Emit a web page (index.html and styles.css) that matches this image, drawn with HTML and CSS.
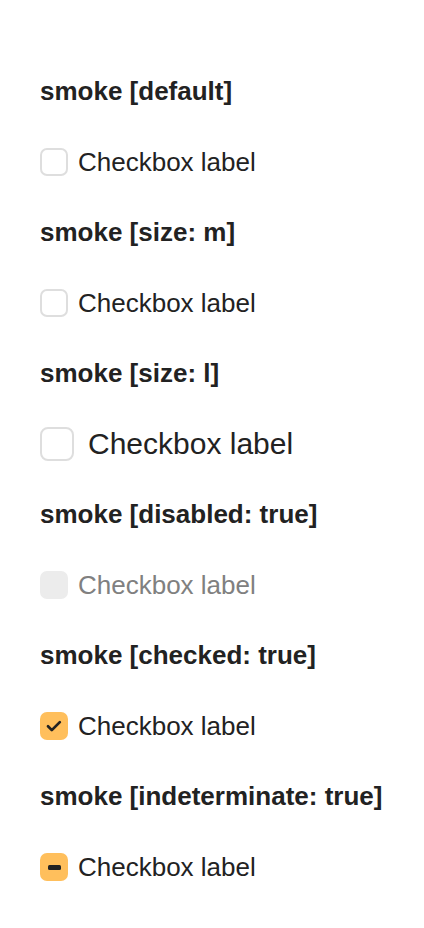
FILE: index.html
```html
<!DOCTYPE html>
<html lang="en">
<head>
<meta charset="utf-8">
<title>Checkbox smoke</title>
<link rel="stylesheet" href="styles.css">
</head>
<body>
<main class="page">
  <section class="case">
    <h2 class="case-title">smoke [default]</h2>
    <label class="cb">
      <span class="cb-box"></span>
      <span class="cb-label">Checkbox label</span>
    </label>
  </section>
  <section class="case">
    <h2 class="case-title">smoke [size: m]</h2>
    <label class="cb">
      <span class="cb-box"></span>
      <span class="cb-label">Checkbox label</span>
    </label>
  </section>
  <section class="case">
    <h2 class="case-title">smoke [size: l]</h2>
    <label class="cb cb-l">
      <span class="cb-box"></span>
      <span class="cb-label">Checkbox label</span>
    </label>
  </section>
  <section class="case">
    <h2 class="case-title">smoke [disabled: true]</h2>
    <label class="cb cb-disabled">
      <span class="cb-box"></span>
      <span class="cb-label">Checkbox label</span>
    </label>
  </section>
  <section class="case">
    <h2 class="case-title">smoke [checked: true]</h2>
    <label class="cb cb-checked">
      <span class="cb-box">
        <svg class="cb-icon" viewBox="0 0 28 28" width="28" height="28"><polyline points="8,14.3 11.8,18.1 19.8,10.1" fill="none" stroke="#222" stroke-width="2.7" stroke-linecap="round" stroke-linejoin="round"/></svg>
      </span>
      <span class="cb-label">Checkbox label</span>
    </label>
  </section>
  <section class="case">
    <h2 class="case-title">smoke [indeterminate: true]</h2>
    <label class="cb cb-checked">
      <span class="cb-box"><span class="cb-dash"></span></span>
      <span class="cb-label">Checkbox label</span>
    </label>
  </section>
</main>
</body>
</html>
```

FILE: styles.css
```css
html, body {
  margin: 0;
  padding: 0;
  background: #fff;
}

body {
  font-family: "Liberation Sans", Arial, sans-serif;
  color: #222;
}

.page {
  padding: 73px 0 0 40px;
  display: flex;
  flex-direction: column;
}

.case {
  display: flex;
  flex-direction: column;
  margin-bottom: 38px;
}

.case-title {
  margin: 0 0 39px 0;
  font-size: 26px;
  line-height: 36px;
  font-weight: 700;
  color: #222;
}

.cb {
  display: flex;
  align-items: center;
  gap: 10px;
  height: 28px;
}

.cb-box {
  box-sizing: border-box;
  width: 28px;
  height: 28px;
  border: 2px solid #dedede;
  border-radius: 7px;
  background: #fff;
  flex: none;
  display: flex;
  align-items: center;
  justify-content: center;
  position: relative;
}

.cb-label {
  font-size: 26px;
  line-height: 28px;
  color: #222;
}

.cb-l {
  gap: 14px;
}

.cb-l .cb-box {
  width: 34px;
  height: 34px;
  border-radius: 8px;
}

.cb-l .cb-label {
  font-size: 30px;
}

.cb-disabled .cb-box {
  border-color: #ececec;
  background: #ececec;
}

.cb-disabled .cb-label {
  color: #808080;
}

.cb-checked .cb-box {
  border: none;
  background: #ffbf5c;
}

.cb-icon {
  display: block;
}

.cb-dash {
  width: 13px;
  height: 5px;
  border-radius: 1.5px;
  background: #222;
}
```
